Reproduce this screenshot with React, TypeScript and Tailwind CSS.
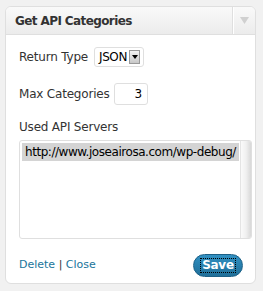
import React from "react";

export default function App() {
  const font = { fontFamily: '"DejaVu Sans", "Lucida Grande", sans-serif' };
  return (
    <div className="w-[263px] h-[291px] bg-[#f1f1f1] pt-[6px] pl-[5px]" style={font}>
      <div className="w-[251px] h-[278px] bg-white border border-[#dfdfdf] rounded-[6px] flex flex-col overflow-hidden">
        <div className="h-[28px] flex items-stretch bg-gradient-to-b from-[#f9f9f9] to-[#ececec] border-b border-[#dfdfdf]">
          <div className="flex-1 flex items-center pl-[9px] pt-[1px] text-[12px] font-bold text-[#333] tracking-[-0.6px]">
            Get API Categories
          </div>
          <div className="w-[23px] border-l border-[#dfdfdf] shadow-[inset_1px_0_0_#fff] flex items-center justify-center">
            <svg width="9" height="7" viewBox="0 0 9 7">
              <path d="M0 0 H9 L4.5 7 Z" fill="#d0d0d0" />
            </svg>
          </div>
        </div>
        <div className="flex-1 flex flex-col pl-[13px] pr-[3px] text-[12px] text-[#333] tracking-[-0.2px]">
          <div className="flex items-center mt-[12px] h-[20px]">
            <span className="w-[75px]">Return Type</span>
            <div className="w-[50px] h-[20px] border border-[#dfdfdf] rounded-[3px] bg-white flex items-center pl-[4px] pr-[3px] text-[12px] text-black tracking-[-0.4px]">
              <span className="flex-1">JSON</span>
              <span className="w-[11px] h-[14px] bg-gradient-to-b from-[#f4f4f4] to-[#c8c8c8] border border-[#999] flex items-center justify-center">
                <svg width="6" height="4" viewBox="0 0 6 4"><path d="M0 0 H6 L3 4 Z" fill="#000" /></svg>
              </span>
            </div>
          </div>
          <div className="flex items-center mt-[16px] h-[22px]">
            <span className="w-[95px]">Max Categories</span>
            <div className="w-[34px] h-[22px] border border-[#dfdfdf] rounded-[3px] bg-white flex items-center justify-end pr-[5px] text-black">
              3
            </div>
          </div>
          <div className="mt-[14px] h-[15px] flex items-center">Used API Servers</div>
          <div className="mt-[6px] mr-0 w-[233px] h-[99px] border border-[#dfdfdf] rounded-[3px] bg-white flex overflow-hidden">
            <div className="flex-1 pt-[2px] pl-[2px] pr-[1px]">
              <div className="h-[18px] bg-[#d4d4d4] flex items-center pl-[3px] text-[12px] text-black tracking-[-0.45px] whitespace-nowrap overflow-hidden">
                http://www.joseairosa.com/wp-debug/
              </div>
            </div>
            <div className="w-[11px] bg-gradient-to-r from-[#fafafa] via-[#f0f0f0] to-[#d8d8d8] border-l border-[#e4e4e4]" />
          </div>
          <div className="flex items-center justify-between mt-[15px] pr-[9px]">
            <div className="text-[11px] text-[#21759b] tracking-[0px]">
              <span>Delete</span>
              <span className="text-[#333]"> | </span>
              <span>Close</span>
            </div>
            <div className="w-[50px] h-[23px] rounded-full bg-gradient-to-b from-[#3190c2] to-[#1f6f99] border border-[#1d6187] flex items-center justify-center">
              <span className="text-white font-bold text-[12px] leading-[13px] px-[1px] tracking-[-0.3px] outline-1 outline-dotted outline-black">Save</span>
            </div>
          </div>
        </div>
      </div>
    </div>
  );
}
